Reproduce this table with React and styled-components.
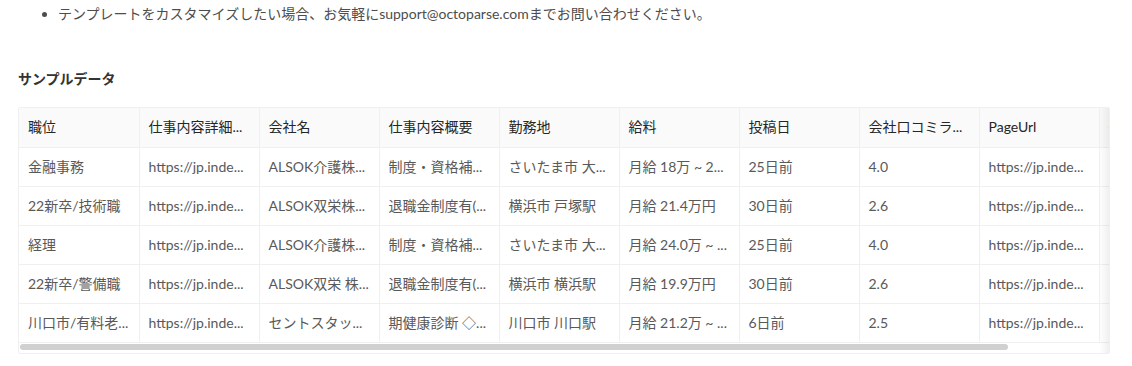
import React from "react";
import styled, { createGlobalStyle } from "styled-components";

const Global = createGlobalStyle`
  html, body {
    margin: 0;
    padding: 0;
    background: #ffffff;
  }
  body {
    font-family: Lato, "Noto Sans CJK JP", sans-serif;
    font-size: 14px;
    color: #4a4a4a;
  }
`;

const Page = styled.div`
  padding: 3px 22px 0 18px;
  width: 1092px;
`;

const Notes = styled.ul`
  margin: 0;
  padding-left: 40px;
  line-height: 22px;
  color: #4d4d4d;
`;

const Note = styled.li`
  font-size: 14px;
`;

const Heading = styled.h3`
  margin: 43px 0 17px;
  font-size: 14px;
  line-height: 22px;
  font-weight: 700;
  color: #333333;
`;

const Frame = styled.div`
  position: relative;
  width: 1092px;
  box-sizing: border-box;
  border: 1px solid #f0f0f0;
  border-radius: 2px;

  &::after {
    content: "";
    position: absolute;
    top: 0;
    right: 0;
    bottom: 0;
    width: 10px;
    pointer-events: none;
    background: linear-gradient(to right, rgba(0, 0, 0, 0), rgba(0, 0, 0, 0.06));
  }
`;

const Viewport = styled.div`
  overflow: hidden;
`;

const Table = styled.table`
  table-layout: fixed;
  border-collapse: collapse;
  width: 1200px;
`;

const Cell = styled.td`
  width: 120px;
  box-sizing: border-box;
  height: 39px;
  padding: 8px 9px;
  line-height: 22px;
  font-size: 14px;
  white-space: nowrap;
  overflow: hidden;
  text-align: left;
  color: ${(p) => (p.$head ? "#262626" : "#595959")};
  background: ${(p) => (p.$head ? "#fafafa" : "#ffffff")};
  font-weight: 400;
  border-right: 1px solid #f0f0f0;
  border-bottom: 1px solid #f0f0f0;
`;

/* horizontal scroll bar under the rows */
const Track = styled.div`
  height: 10px;
  padding: 1px 2px 3px 1px;
  box-sizing: border-box;
`;

const Thumb = styled.div`
  width: ${(p) => p.$width}px;
  height: 6px;
  border-radius: 3px;
  background: #d0d0d0;
`;

const columns = [
  "職位",
  "仕事内容詳細...",
  "会社名",
  "仕事内容概要",
  "勤務地",
  "給料",
  "投稿日",
  "会社口コミラ...",
  "PageUrl",
  "Count",
];

const url = "https://jp.inde...";

const rows = [
  ["金融事務", url, "ALSOK介護株...", "制度・資格補...", "さいたま市 大...", "月給 18万 ~ 2...", "25日前", "4.0", url, "1"],
  ["22新卒/技術職", url, "ALSOK双栄株...", "退職金制度有(...", "横浜市 戸塚駅", "月給 21.4万円", "30日前", "2.6", url, "1"],
  ["経理", url, "ALSOK介護株...", "制度・資格補...", "さいたま市 大...", "月給 24.0万 ~ ...", "25日前", "4.0", url, "1"],
  ["22新卒/警備職", url, "ALSOK双栄 株...", "退職金制度有(...", "横浜市 横浜駅", "月給 19.9万円", "30日前", "2.6", url, "1"],
  ["川口市/有料老...", url, "セントスタッ...", "期健康診断 ◇...", "川口市 川口駅", "月給 21.2万 ~ ...", "6日前", "2.5", url, "1"],
];

export default function App() {
  return (
    <>
      <Global />
      <Page>
        <Notes>
          <Note>テンプレートをカスタマイズしたい場合、お気軽にsupport@octoparse.comまでお問い合わせください。</Note>
        </Notes>
        <Heading>サンプルデータ</Heading>
        <Frame>
          <Viewport>
            <Table>
              <thead>
                <tr>
                  {columns.map((c) => (
                    <Cell as="th" $head key={c}>
                      {c}
                    </Cell>
                  ))}
                </tr>
              </thead>
              <tbody>
                {rows.map((r, i) => (
                  <tr key={i}>
                    {r.map((v, j) => (
                      <Cell key={j}>{v}</Cell>
                    ))}
                  </tr>
                ))}
              </tbody>
            </Table>
          </Viewport>
          <Track>
            <Thumb $width={988} />
          </Track>
        </Frame>
      </Page>
    </>
  );
}
